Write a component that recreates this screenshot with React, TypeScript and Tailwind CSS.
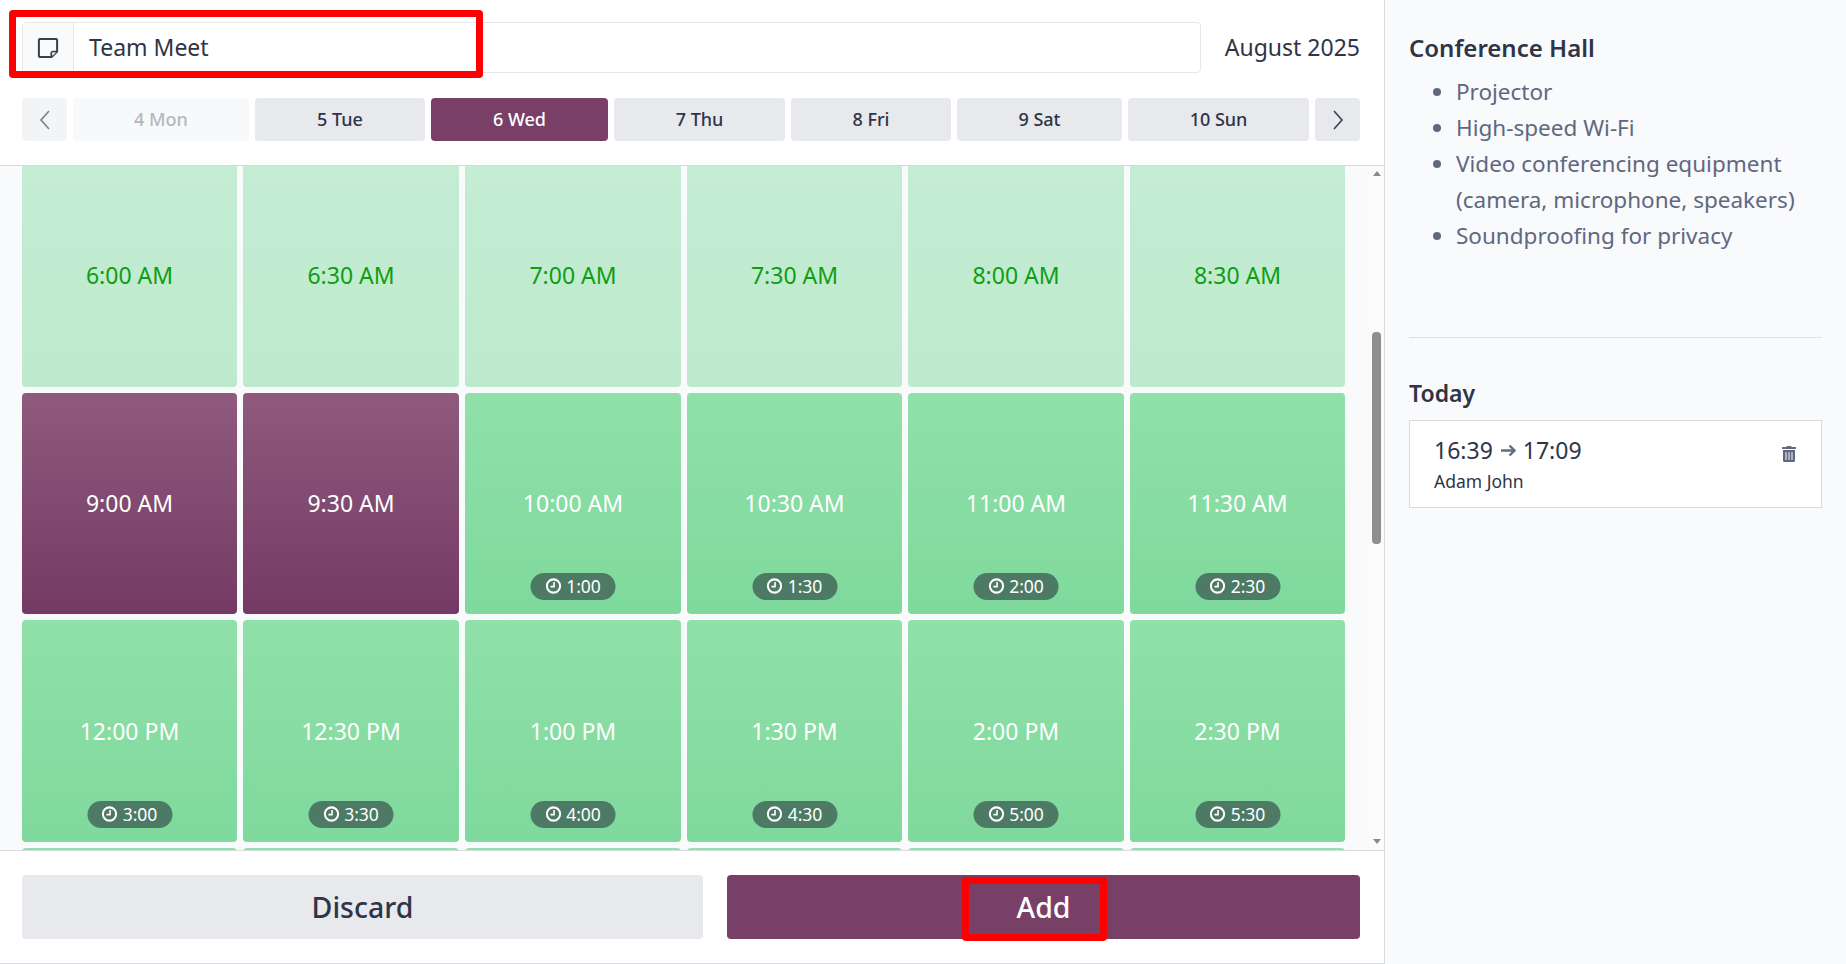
import React from "react";
import { FaTrashAlt } from "react-icons/fa";

const ff = "font-['Noto_Sans',sans-serif]";

function Note() {
  return (
    <svg width="22" height="22" viewBox="0 0 22 22" fill="none">
      <path d="M3 1.9h16a1.1 1.1 0 0 1 1.1 1.1v11.6l-5.5 5.5H3a1.1 1.1 0 0 1-1.1-1.1V3A1.1 1.1 0 0 1 3 1.9z" stroke="#374151" strokeWidth="2" />
      <path d="M14.2 20v-4a1.4 1.4 0 0 1 1.4-1.4H20" stroke="#374151" strokeWidth="1.6" />
      <path d="M15.4 19l3.8-3.6h-3.8z" fill="#f3d9a8" />
    </svg>
  );
}

function Clock() {
  return (
    <svg width="16" height="16" viewBox="0 0 15 15" fill="none" className="shrink-0">
      <circle cx="7.5" cy="7.5" r="6.2" stroke="white" strokeWidth="1.9" />
      <path d="M8 3.8v4.3H4.6" stroke="white" strokeWidth="1.5" />
    </svg>
  );
}

function Slot({ time, kind, dur }: { time: string; kind: "light" | "green" | "purple"; dur?: string }) {
  const bg =
    kind === "light"
      ? "bg-gradient-to-b from-[#c4edd4] to-[#bdeacc] text-[#0f9d12]"
      : kind === "green"
        ? "bg-gradient-to-b from-[#90e0aa] to-[#7fd99c] text-white"
        : "bg-gradient-to-b from-[#8f5a7d] to-[#743a64] text-white";
  return (
    <div className={`relative flex items-center justify-center rounded-[4px] text-[23px] ${bg}`}>
      <span>{time}</span>
      {dur ? (
        <span className="absolute bottom-[14px] left-1/2 flex h-[27px] w-[85px] -translate-x-1/2 items-center justify-center gap-[5px] rounded-full bg-[#4d7a64] pb-[1px] text-[17.5px] leading-[24px] text-white">
          <Clock />
          {dur}
        </span>
      ) : null}
    </div>
  );
}

const slots: { time: string; kind: "light" | "green" | "purple"; dur?: string }[] = [
  { time: "6:00 AM", kind: "light" },
  { time: "6:30 AM", kind: "light" },
  { time: "7:00 AM", kind: "light" },
  { time: "7:30 AM", kind: "light" },
  { time: "8:00 AM", kind: "light" },
  { time: "8:30 AM", kind: "light" },
  { time: "9:00 AM", kind: "purple" },
  { time: "9:30 AM", kind: "purple" },
  { time: "10:00 AM", kind: "green", dur: "1:00" },
  { time: "10:30 AM", kind: "green", dur: "1:30" },
  { time: "11:00 AM", kind: "green", dur: "2:00" },
  { time: "11:30 AM", kind: "green", dur: "2:30" },
  { time: "12:00 PM", kind: "green", dur: "3:00" },
  { time: "12:30 PM", kind: "green", dur: "3:30" },
  { time: "1:00 PM", kind: "green", dur: "4:00" },
  { time: "1:30 PM", kind: "green", dur: "4:30" },
  { time: "2:00 PM", kind: "green", dur: "5:00" },
  { time: "2:30 PM", kind: "green", dur: "5:30" },
  { time: "", kind: "green" },
  { time: "", kind: "green" },
  { time: "", kind: "green" },
  { time: "", kind: "green" },
  { time: "", kind: "green" },
  { time: "", kind: "green" },
];

const tabs = [
  { label: "5 Tue", w: "w-[170px]" },
  { label: "6 Wed", w: "w-[177px]", active: true },
  { label: "7 Thu", w: "w-[171px]" },
  { label: "8 Fri", w: "w-[160px]" },
  { label: "9 Sat", w: "w-[165px]" },
  { label: "10 Sun", w: "w-[181px]" },
];

export default function App() {
  return (
    <div className={`relative flex h-[964px] w-[1846px] overflow-hidden bg-[#f9fafb] text-[#2f3447] ${ff}`}>
      <div className="flex h-full w-[1385px] shrink-0 flex-col border-r border-b border-[#d8dadd]">
        <header className="h-[166px] shrink-0 border-b border-[#d8dadd] bg-white pt-[22px] pr-[24px] pl-[22px]">
          <div className="flex items-center justify-between">
            <div className="flex h-[51px] w-[1179px] rounded-[4px] border border-[#e5e7eb]">
              <div className="flex w-[51px] items-center justify-center border-r border-[#e5e7eb] bg-[#f9fafb]">
                <Note />
              </div>
              <div className="flex items-center pl-[15px] text-[23px] leading-none">Team Meet</div>
            </div>
            <div className="text-[23px] leading-none">August 2025</div>
          </div>
          <nav className="mt-[25px] flex h-[43px] gap-[6px]">
            <div className="flex w-[45px] items-center justify-center rounded-[4px] bg-[#f3f4f6]">
              <svg width="14" height="22" viewBox="0 0 14 22" fill="none">
                <path d="M11 2 L3 11 L11 20" stroke="#7b8087" strokeWidth="1.6" />
              </svg>
            </div>
            <div className="flex w-[176px] items-center justify-center rounded-[4px] bg-[#f8f9fa] text-[18px] font-medium text-[#b4b8be]">
              4 Mon
            </div>
            {tabs.map((t) => (
              <div
                key={t.label}
                className={`flex items-center justify-center rounded-[4px] text-[18px] font-medium ${t.w} ${
                  t.active ? "bg-[#793f67] text-white" : "bg-[#e7e9ed]"
                }`}
              >
                {t.label}
              </div>
            ))}
            <div className="flex w-[45px] items-center justify-center rounded-[4px] bg-[#e7e9ed]">
              <svg width="14" height="22" viewBox="0 0 14 22" fill="none">
                <path d="M3 2 L11 11 L3 20" stroke="#374151" strokeWidth="1.6" />
              </svg>
            </div>
          </nav>
        </header>

        <div className="flex min-h-0 flex-1 justify-between overflow-hidden pl-[22px]">
          <div className="-mt-[2px] grid h-[900px] w-[1323px] shrink-0 grid-cols-[215px_216px_216px_215px_216px_215px] grid-rows-[223px_221px_222px_221px] gap-[6px]">
            {slots.map((s, i) => (
              <Slot key={i} time={s.time} kind={s.kind} dur={s.dur} />
            ))}
          </div>
          <div className="flex w-[15px] flex-col items-center bg-[#fbfbfb] pt-[5px] pb-[6px]">
            <div className="h-0 w-0 border-x-[4px] border-b-[5px] border-x-transparent border-b-[#8a8a8a]" />
            <div className="mt-[156px] h-[212px] w-[9px] shrink-0 rounded-[4px] bg-[#8e8f8e]" />
            <div className="mt-auto h-0 w-0 border-x-[4px] border-t-[5px] border-x-transparent border-t-[#8a8a8a]" />
          </div>
        </div>

        <footer className="flex h-[113px] shrink-0 gap-[24px] border-t border-[#d8dadd] bg-white pt-[24px] pr-[24px] pl-[22px]">
          <div className="flex h-[64px] w-[681px] items-center justify-center rounded-[4px] bg-[#e7e9ed] text-[28.5px] font-medium">
            Discard
          </div>
          <div className="flex h-[64px] flex-1 items-center justify-center rounded-[4px] bg-[#783f67] text-[28.5px] font-medium text-white">
            Add
          </div>
        </footer>
      </div>

      <aside className="flex-1 px-[24px] pt-[33px]">
        <h2 className="text-[24px] leading-[30px] font-semibold">Conference Hall</h2>
        <ul className="mt-[11px] list-disc pl-[47px] text-[22.5px] leading-[36px] text-[#5f6880]">
          <li>Projector</li>
          <li>High-speed Wi-Fi</li>
          <li>Video conferencing equipment (camera, microphone, speakers)</li>
          <li>Soundproofing for privacy</li>
        </ul>
        <hr className="mt-[83px] border-[#dee2e6]" />
        <h2 className="mt-[40px] text-[23px] leading-[30px] font-semibold">Today</h2>
        <div className="mt-[12px] flex h-[88px] items-center justify-between border border-[#d8dadd] bg-white pr-[24px] pl-[24px]">
          <div>
            <div className="flex items-center gap-[7px] text-[23px] leading-[30px]">
              16:39
              <svg width="16" height="13" viewBox="0 0 16 13" fill="none">
                <path d="M1 6.5h13M9.5 1.5l5 5-5 5" stroke="#656d82" strokeWidth="2.4" />
              </svg>
              17:09
            </div>
            <div className="mt-[4px] text-[17.5px] leading-[24px]">Adam John</div>
          </div>
          <FaTrashAlt className="mb-[20px] text-[#5f6880]" size={16} />
        </div>
      </aside>

      <div className="pointer-events-none absolute top-[10px] left-[9px] h-[68px] w-[474px] rounded-[4px] border-[7px] border-[#ff0000]" />
      <div className="pointer-events-none absolute top-[877px] left-[962px] h-[64px] w-[145px] rounded-[4px] border-[7px] border-[#ff0000]" />
    </div>
  );
}
